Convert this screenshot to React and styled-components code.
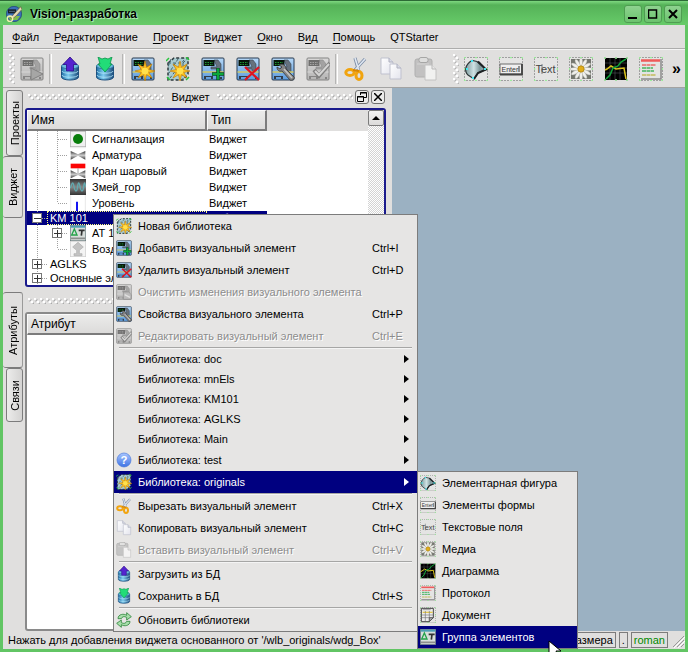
import { Fragment } from "react";
import styled, { createGlobalStyle, css } from "styled-components";

const GlobalStyle = createGlobalStyle`
  :root {
    --face: #e0dfde;
    --menu: #e6e5e4;
    --line: #7c7c7c;
    --select: #000080;
    --green: #62c564;
  }
  * {
    box-sizing: border-box;
  }
  body {
    margin: 0;
    background: var(--face);
    font-family: "Liberation Sans", Arial, sans-serif;
    font-size: 11px;
    line-height: 14px;
    color: #000;
  }
  button {
    font: inherit;
    color: inherit;
    padding: 0;
    border: none;
    background: none;
  }
`

const Window = styled.div`
  position: relative;
  display: flex;
  flex-direction: column;
  min-height: 100vh;
  background: var(--face);
  border: 3px solid var(--green);
  border-top: none;
`

const TitleBar = styled.header`
  display: flex;
  align-items: center;
  gap: 2px;
  height: 25px;
  margin: 0 -3px;
  padding: 2px 6px 0;
  border-top: 1px solid #2c6a35;
  background: linear-gradient(#7ed880 0, #55b258 4px, #67cb69 100%);
`

const Title = styled.h1`
  flex: 1;
  margin: 0 0 0 6px;
  font-size: 12px;
  font-weight: 700;
  text-shadow: 1px 1px 1px #c4f0c4;
`

const WindowButton = styled.button`
  display: flex;
  align-items: center;
  justify-content: center;
  width: 18px;
  height: 18px;
  border: 1px solid #4f9d52;
  border-radius: 3px;
  background: linear-gradient(#8ed28f, #6cc36e);
`

const MenuBar = styled.nav`
  display: flex;
  gap: 1px;
  height: 24px;
  padding: 0 2px;
  border-bottom: 1px solid #adadac;
`

const MenuLink = styled.a`
  padding: 5px 7px;
  color: #000;
  text-decoration: none;
  u {
    text-underline-offset: 2px;
  }
`

const ToolBar = styled.div`
  display: flex;
  align-items: center;
  height: 39px;
  padding-left: 6px;
  border-top: 1px solid #f4f4f4;
  border-bottom: 1px solid #a3a3a2;
`

const ToolButton = styled.button`
  display: flex;
  align-items: center;
  justify-content: center;
  width: 35px;
  height: 34px;
`

const ToolLine = styled.span`
  width: 3px;
  height: 30px;
  border-left: 1px solid #b5b5b4;
  border-right: 1px solid #fff;
`

const BarHandle = styled.span`
  width: 6px;
  height: 30px;
  margin: 0 -1px 0 ${props => props.$spaced ? "10px" : "0"};
  background-image:
    radial-gradient(circle at 1px 1px, #fff 1px, transparent 2px),
    radial-gradient(circle at 4px 4px, #fff 1px, transparent 2px),
    radial-gradient(circle at 2px 2px, #b4b4b4 1px, transparent 2px),
    radial-gradient(circle at 5px 5px, #b4b4b4 1px, transparent 2px);
  background-size: 6px 6px;
`

const More = styled.button`
  flex: 1;
  font-size: 16px;
  font-weight: 700;
`

const Body = styled.main`
  flex: 1;
  display: flex;
`

const Docks = styled.div`
  flex: none;
  display: flex;
  flex-direction: column;
  gap: 5px;
  width: 389px;
`

const DockRow = styled.section`
  display: flex;
  ${props => props.$grow && css`
    flex: 1;
  `}
`

const Tabs = styled.div`
  display: flex;
  flex-direction: column;
  width: 22px;
  padding-top: ${props => props.$flush ? "0" : "2px"};
  border-right: 2px solid var(--face);
`

const Tab = styled.button`
  display: flex;
  align-items: center;
  justify-content: center;
  height: ${props => props.$height}px;
  margin-left: 3px;
  border: 1px solid var(--line);
  border-radius: 3px;
  background: linear-gradient(90deg, #ececeb, #d4d3d2);
  span {
    writing-mode: vertical-rl;
    transform: rotate(180deg);
  }
  ${props => props.$active && css`
    margin-left: 0;
    border-left: none;
    border-right-color: #9a9a99;
    background: var(--face);
  `}
`

const Dock = styled.div`
  flex: 1;
  display: flex;
  flex-direction: column;
  padding-right: 6px;
`

const DockTitle = styled.div`
  display: flex;
  align-items: center;
  gap: 2px;
  height: 20px;
  padding: 0 1px 2px 3px;
`

const DockName = styled.h2`
  margin: 0 5px;
  font-size: 11px;
  font-weight: 400;
`

const Zigzag = styled.span`
  flex: 1;
  height: 6px;
  background-image:
    radial-gradient(circle at 1px 1px, #fff 1px, transparent 2px),
    radial-gradient(circle at 4px 4px, #fff 1px, transparent 2px),
    radial-gradient(circle at 2px 2px, #aaa 1px, transparent 2px),
    radial-gradient(circle at 5px 5px, #aaa 1px, transparent 2px);
  background-size: 6px 6px;
`

const DockButton = styled.button`
  display: flex;
  align-items: center;
  justify-content: center;
  width: 14px;
  height: 14px;
  border: 1px solid #6f6f6f;
  border-radius: 3px;
  background: #ececeb;
`

const Sheet = styled.div`
  flex: 1;
  display: flex;
  align-items: stretch;
  border: 2px solid ${props => props.$focused ? "#1a1a8c" : "#8a8a8a"};
  border-radius: 3px;
  background: #fff;
`

const Table = styled.table`
  flex: 1;
  align-self: flex-start;
  width: 100%;
  table-layout: fixed;
  border-collapse: separate;
  border-spacing: 0;
  td {
    padding: 0;
    white-space: nowrap;
  }
  td + td {
    padding-left: 2px;
  }
`

const HeadCell = styled.th`
  height: 21px;
  padding: 0 3px;
  text-align: left;
  font-size: 12px;
  font-weight: 400;
  background: var(--face);
  ${props => props.$width && css`
    width: ${props.$width}px;
    border: 1px solid #fafafa;
    border-right: 2px solid var(--line);
    border-bottom: 2px solid var(--line);
    background: linear-gradient(#ebebea, #dcdbda);
  `}
`

const Row = styled.tr`
  height: ${props => props.$icon ? "16px" : "14px"};
  line-height: 14px;
  ${props => props.$selected && css`
    color: #fff;
    td:not(:last-child) {
      background: var(--select);
    }
  `}
`

const NameCell = styled.div`
  display: flex;
  align-items: center;
  height: ${props => props.$icon ? "16px" : "14px"};
`

const NodeName = styled.span`
  flex: 1;
  display: flex;
  align-items: center;
  gap: 6px;
  height: 100%;
  padding-left: 3px;
  ${props => props.$selected && css`
    outline: 1px dotted #ffff7f;
    outline-offset: -1px;
  `}
`

const vertical = "repeating-linear-gradient(#a0a0a0 0 1px, transparent 1px 2px)";
const horizontal = "repeating-linear-gradient(90deg, #a0a0a0 0 1px, transparent 1px 2px)";

const Guide = styled.span`
  display: flex;
  align-items: center;
  flex: none;
  width: 20px;
  height: 100%;
  padding-left: 5px;
  background-repeat: no-repeat;
  background-image: ${vertical}, ${horizontal};
  background-position: 10px 0, 11px 50%;
  background-size:
    1px ${props => props.$kind === "end" ? "50%" : "100%"},
    ${props => props.$kind === "line" ? "0" : "9px"} 1px;
`

const Expander = styled.button`
  display: flex;
  width: 10px;
  height: 10px;
  border: 1px solid #777;
  background: #fff;
`

const ScrollBar = styled.div`
  flex: none;
  width: 16px;
  background: repeating-conic-gradient(#d4d4d4 0 25%, #fff 0 50%) 0 0 / 2px 2px;
`

const ScrollButton = styled.button`
  display: flex;
  align-items: center;
  justify-content: center;
  width: 16px;
  height: 16px;
  border: 1px solid var(--line);
  border-radius: 2px;
  background: linear-gradient(#f2f2f2, #dcdbda);
`

const Workspace = styled.div`
  flex: 1;
  background: #9bb1c2;
`

const StatusBar = styled.footer`
  display: flex;
  align-items: center;
  gap: 3px;
  height: 18px;
  padding-left: 5px;
`

const StatusText = styled.span`
  flex: 1;
  white-space: nowrap;
`

const StatusCell = styled.span`
  padding: 0 2px;
  border: 1px solid var(--line);
  color: ${props => props.$user ? "#008a00" : "#000"};
`

const Menu = styled.div`
  position: absolute;
  z-index: 1;
  border: 1px solid var(--line);
  background: var(--menu);
`

const ContextMenu = styled(Menu)`
  left: 110px;
  top: 214px;
  width: 305px;
`

const SubMenu = styled(Menu)`
  left: 100%;
  top: 0;
  width: 161px;
`

const MenuRow = styled.div`
  position: relative;
`

const Item = styled.button`
  display: grid;
  grid-template-columns: 16px 1fr auto;
  column-gap: 6px;
  align-items: center;
  width: 100%;
  height: ${props => props.$low ? "20px" : "22px"};
  padding-left: 2px;
  text-align: left;
  white-space: nowrap;
  &:disabled {
    color: #8c8c8c;
    text-shadow: 1px 1px 0 #fff;
  }
  ${props => props.$selected && css`
    color: #fff;
    background: var(--select);
  `}
`

const Shortcut = styled.span`
  width: 45px;
  padding-left: ${props => props.$arrow ? "32px" : "0"};
`

const Separator = styled.hr`
  height: 2px;
  margin: 0 5px;
  border: none;
  border-top: 1px solid #a6a6a5;
  border-bottom: 1px solid #f4f4f4;
`

const Picture = styled.svg`
  display: block;
  flex: none;
  ${props => props.$gray && css`
    filter: grayscale(1) opacity(0.55);
  `}
`

const Pointer = styled.svg`
  position: absolute;
  left: 130px;
  bottom: -12px;
  z-index: 2;
`

const Frame = () => (
  <>
    <rect x="0.5" y="0.5" width="23" height="23" fill="#e4e4e3" stroke="#5c5c5c" strokeDasharray="1 2" />
    <path d="M0 2V0h2M22 0h2v2M24 22v2h-2M2 24H0v-2M11 .5h2M11 23.5h2M.5 11v2M23.5 11v2" fill="none" stroke="#9bee9b" strokeWidth="1.5" />
  </>
)

const Board = () => (
  <>
    <rect x="1" y="1" width="22" height="22" rx="1" fill="url(#sky)" stroke="#27394e" />
    <path d="M13 3h4l3 4v8h-4v-3h-6v-2h6z" fill="#66727e" stroke="#3b4149" strokeWidth="0.6" />
    <path d="M1.500 15h21" stroke="#d2c964" strokeWidth="1.500" />
    <path d="M3 19v3h2v-2h5v2h2v-3M19 20h2v2h-2z" fill="#333d48" />
    <rect x="2.5" y="3" width="11" height="6" fill="#06150a" />
    <path d="M4 5.500h8M4 7.500h8" stroke="#1d9431" strokeWidth="1" strokeDasharray="1.500 1" />
  </>
)

const Star = () => (
  <g transform="translate(14 14)">
    {[0, 45, 90, 135, 180, 225, 270, 315].map(angle => (
      <path key={angle} d="M-2.500 0L0 -10L2.500 0z" transform={`rotate(${angle})`} fill="#ffc31f" stroke="#c27a00" strokeWidth="0.6" />
    ))}
    <circle r="3.500" fill="#ffe04d" />
  </g>
)

const Drum = () => (
  <>
    <path d="M3.500 9v11c0 4 17 4 17 0V9z" fill="url(#drum)" stroke="#1d4f7d" />
    <path d="M4 14c0 3 16 3 16 0M4 18c0 3 16 3 16 0" fill="none" stroke="#b3e4f7" strokeWidth="0.8" />
    <ellipse cx="12" cy="9" rx="8.500" ry="3" fill="#6fbce0" stroke="#2d719a" strokeWidth="0.8" />
  </>
)

const petals = [0, 30, 60, 90, 120, 150, 180, 210, 240, 270, 300, 330]

const drawings = {
  app: (
    <>
      <circle cx="12" cy="12" r="11.500" fill="#3b6fb8" stroke="#1f3c6b" />
      <path d="M3 5h12v6H3z" fill="#16202c" />
      <path d="M5 8h8" stroke="#93c6ef" strokeDasharray="2 1" />
      <path d="M3 15h18l-4 6H6z" fill="#7ebd4a" />
      <path d="M22 1L11 13l-4 5 3 1 5-4L24 5z" fill="#e3d9b4" stroke="#65583a" />
      <circle cx="6" cy="19" r="4" fill="none" stroke="#f0efae" strokeWidth="2" />
    </>
  ),
  run: <><Board /><path d="M11 11v12l12-6z" fill="#777" stroke="#333" /></>,
  create: <><Board /><Star /></>,
  add: <><Board /><path d="M17 11v12M11 17h12" stroke="#064d22" strokeWidth="3.500" /><path d="M17 11.500v11M11.500 17h11" stroke="#0ba83a" strokeWidth="2" /></>,
  remove: <><Board /><path d="M9 10l14 13M23 10L9 23" stroke="#e01420" strokeWidth="2.200" /></>,
  props: (
    <>
      <Board />
      <path d="M8 8c3-2 7 0 7 4l8 8c1 2-2 4-4 3l-8-9c-3 1-5-1-5-4l3 2 2-2z" fill="#858585" stroke="#3f3f3f" strokeWidth="0.9" />
      <path d="M13 12l8 9" stroke="#c4c4c4" strokeWidth="1.500" />
    </>
  ),
  edit: <><Board /><path d="M8 13l5 6L24 6" fill="none" stroke="#333" strokeWidth="4" /><path d="M9 14l4 4L23 7" fill="none" stroke="#ccc" strokeWidth="2" /></>,
  clear: <><Board /><path d="M11 12h8l4 4v7H11z" fill="#999" stroke="#444" /><path d="M13 16l8 4" stroke="#ddd" strokeWidth="2" /></>,
  library: (
    <>
      <path d="M2 6l6-5h14v16l-5 6H2z" fill="#a9cbd0" stroke="#2c393c" strokeDasharray="3 2" strokeWidth="1.500" />
      <path d="M2 6h15v17M17 6l5-5M5 2l-3 8M12 2l-9 14M18 3L4 21M21 8l-9 12" fill="none" stroke="#456870" strokeDasharray="3 2" />
      <path d="M0 4l3-3M20 0l3 3M1 20l3 3M20 23l3-3" stroke="#29c43e" strokeWidth="1.500" />
      <Star />
    </>
  ),
  load: <><Drum /><path d="M12 0l7 7.500h-3.500V14h-7V7.500H5z" fill="#5524cf" stroke="#2c0e84" strokeWidth="0.8" /></>,
  save: <><Drum /><path d="M5 0l4 2 3-1 3 1 4-2-2 7h2l-7 8-7-8h2z" fill="#22dc78" stroke="#0a9249" strokeWidth="0.8" /></>,
  cut: (
    <>
      <path d="M11 1l4 14M21 2L10 14" stroke="#7c8da6" strokeWidth="3.200" />
      <path d="M11 1l4 13M21 2L11 13" stroke="#dfe7f2" strokeWidth="1.600" />
      <ellipse cx="6" cy="15.500" rx="4.200" ry="3" fill="none" stroke="#f1a40f" strokeWidth="3" />
      <ellipse cx="15" cy="18.500" rx="3" ry="4" fill="none" stroke="#f1a40f" strokeWidth="3" />
      <path d="M9 13l6 1" stroke="#d98600" strokeWidth="2" />
    </>
  ),
  copy: (
    <>
      <path d="M2 1h8l4 4v12H2z" fill="url(#paper)" stroke="#bfc1ce" />
      <path d="M10 1v4h4" fill="#d8dae5" stroke="#aeb0be" />
      <path d="M11 7h7l4 4v11H11z" fill="url(#paper)" stroke="#bfc1ce" />
      <path d="M18 7v4h4" fill="#d8dae5" stroke="#aeb0be" />
    </>
  ),
  paste: (
    <>
      <rect x="1" y="2" width="17" height="18" rx="2" fill="#a9a9a9" stroke="#888" />
      <rect x="5" y="0.500" width="9" height="5" rx="2" fill="#ddd" stroke="#777" />
      <path d="M3 7h12" stroke="#ccc" />
      <path d="M11 8h7l4 4v11H11z" fill="#fff" stroke="#aaa" />
      <path d="M18 8v4h4" fill="#eee" stroke="#999" />
    </>
  ),
  shape: (
    <>
      <Frame />
      <path d="M8 3.500c-7 4-8 11-4 14.500l6 4 4-6 8-3.500-9-8z" fill="url(#steel)" stroke="#2e3638" strokeWidth="1.200" />
      <path d="M10 22l4-6 8-3.500-8-8" fill="none" stroke="#1d2224" strokeWidth="2" />
      <path d="M7 4h2M20 12h2M8 21h2M2 12h2" stroke="#43e8f2" strokeWidth="2" />
    </>
  ),
  form: (
    <>
      <Frame />
      <rect x="1" y="7" width="22" height="10" fill="#efefef" stroke="#6d6d6d" />
      <path d="M1 17.500h22V7" fill="none" stroke="#444" strokeWidth="1.800" />
      <text x="2.500" y="14.500" fontSize="7" fill="#333">Enter</text>
      <path d="M20 9v6" stroke="#333" />
    </>
  ),
  text: (
    <>
      <Frame />
      <text x="1.500" y="16" fontSize="11" fill="#444">Text</text>
      <path d="M8 7v10" stroke="#555" strokeWidth="0.700" />
    </>
  ),
  media: (
    <>
      <Frame />
      <rect x="2" y="2" width="20" height="20" fill="#74766f" />
      <g transform="translate(12 12)">
        {petals.map(angle => (
          <ellipse key={angle} cy="-6.500" rx="1.600" ry="4.500" transform={`rotate(${angle})`} fill="#f0f0ec" stroke="#a5a59e" strokeWidth="0.4" />
        ))}
        <circle r="3.200" fill="#e0ad1d" stroke="#9d7400" strokeWidth="0.600" />
      </g>
    </>
  ),
  chart: (
    <>
      <rect x="1" y="1" width="22" height="22" fill="#000" />
      <path d="M1 6h22M1 11h22M1 16h22M6 1v22M11 1v22M16 1v22" stroke="#5c6268" strokeWidth="0.500" />
      <path d="M1 13l2-1 4-3 5 3 8-1 2 11" fill="none" stroke="#d8c21c" strokeWidth="1.500" />
      <path d="M2 22l4-4 3-7 5-2 3-4 5-3" fill="none" stroke="#11a63b" strokeWidth="1.500" />
      <path d="M0 1h24M0 23h24" stroke="#8fdd8f" strokeDasharray="2 9" strokeWidth="1.500" />
    </>
  ),
  protocol: (
    <>
      <Frame />
      <path d="M2 3.500h19" stroke="#ef5a5a" strokeWidth="2.500" />
      <path d="M3 8h14" stroke="#ea6a6a" strokeWidth="1.500" strokeDasharray="4 0.500" />
      <path d="M3 11h11M3 14h12" stroke="#45b45f" strokeWidth="1.500" strokeDasharray="4 0.500" />
      <path d="M3 18h14" stroke="#c2ba5c" strokeWidth="1.500" strokeDasharray="4 0.500" />
      <path d="M22 2v20H2" fill="none" stroke="#8a8a8a" strokeWidth="1.500" />
    </>
  ),
  document: (
    <>
      <Frame />
      <path d="M2 2h18v14l-6 6H2z" fill="#ededed" stroke="#444" strokeWidth="1.500" />
      <path d="M4 8h15" stroke="#e3c84f" strokeWidth="2" />
      <path d="M3 12h17M3 16h17M8 6v15M14 6v15M4 4h12" stroke="#777" />
      <path d="M20 16h-6v6z" fill="#aaa" stroke="#444" />
    </>
  ),
  group: (
    <>
      <rect x="0.500" y="0.500" width="23" height="23" fill="#d8dedb" stroke="#66777a" />
      <path d="M1 2.500h22" stroke="#4b9eb4" strokeWidth="3" />
      <path d="M6.500 6L2.500 15h8z" fill="none" stroke="#24a34a" strokeWidth="2" />
      <path d="M13 8h9M18 8l-1 8" stroke="#333" strokeWidth="2.500" />
      <path d="M2 20h20" stroke="#666" strokeWidth="2.500" strokeDasharray="2 1" />
    </>
  ),
  help: (
    <>
      <circle cx="12" cy="12" r="10.500" fill="url(#help)" stroke="#4b78d8" />
      <text x="12" y="18" fontSize="17" fontWeight="700" textAnchor="middle" fill="#fff">?</text>
    </>
  ),
  refresh: (
    <>
      <path d="M3 10c0-7 9-8 13-5V1l7 6-7 5V8c-4-2-7-1-8 2z" fill="#a7deaa" stroke="#2b8337" strokeWidth="1.200" />
      <path d="M21 14c0 7-9 8-13 5v4l-7-6 7-5v4c4 2 7 1 8-2z" fill="#a7deaa" stroke="#2b8337" strokeWidth="1.200" />
    </>
  ),
  signal: <><rect x="0.500" y="0.500" width="23" height="23" fill="#f0f0f0" stroke="#aaa" /><circle cx="12" cy="12" r="7.500" fill="#087d0b" /></>,
  valve: <><path d="M0 1h24" stroke="#ddd" /><path d="M1 6l11 5 11-5v13l-11-6-11 6z" fill="url(#metal)" /></>,
  ballValve: (
    <>
      <path d="M1 1h22v7H1z" fill="#fb0505" />
      <path d="M12 8v8" stroke="#777" />
      <path d="M1 11l11 5 11-5v12l-11-5-11 5z" fill="url(#metal)" />
    </>
  ),
  coil: <><rect width="24" height="24" fill="url(#coil)" /><path d="M0 13c2 0 2-7 4-7s2 12 5 12S11 6 13 6s2 12 5 12 2-12 4-12l2 6" fill="none" stroke="#62aab0" strokeWidth="2" /></>,
  level: <><path d="M1 0v24M23 0v24" stroke="#ddd" /><path d="M10.500 10v14" stroke="#1515f2" strokeWidth="3" /></>,
  fan: <><rect x="0.500" y="0.500" width="23" height="23" fill="#f4f4f4" stroke="#ccc" /><path d="M12 2l8 7-6 5v5h4v3H6v-3h4v-5L4 9z" fill="#c3c3c3" stroke="#aaa" /></>,
}

const Icon = ({ name, size = 16, gray }) => (
  <Picture width={size} height={size} viewBox="0 0 24 24" $gray={gray} aria-hidden="true">
    {drawings[name]}
  </Picture>
)

const Gradients = () => (
  <Picture width="0" height="0">
    <linearGradient id="sky" x2="0" y2="1"><stop stopColor="#b6d8f8" /><stop offset="1" stopColor="#5b9bdd" /></linearGradient>
    <linearGradient id="drum"><stop stopColor="#1f6ea6" /><stop offset="0.400" stopColor="#7fcdf0" /><stop offset="1" stopColor="#1c4b7b" /></linearGradient>
    <linearGradient id="paper" x2="1" y2="1"><stop stopColor="#fff" /><stop offset="1" stopColor="#e3e4ed" /></linearGradient>
    <linearGradient id="steel"><stop stopColor="#7f9c9f" /><stop offset="0.400" stopColor="#cfe2e4" /><stop offset="0.700" stopColor="#7d979a" /><stop offset="1" stopColor="#a8bfc2" /></linearGradient>
    <linearGradient id="metal" x2="0" y2="1"><stop stopColor="#333" /><stop offset="0.500" stopColor="#ccc" /><stop offset="1" stopColor="#333" /></linearGradient>
    <linearGradient id="coil" x2="0" y2="1"><stop stopColor="#333" /><stop offset="0.500" stopColor="#888" /><stop offset="1" stopColor="#333" /></linearGradient>
    <linearGradient id="help" x2="0" y2="1"><stop stopColor="#a8c6ff" /><stop offset="1" stopColor="#3d72e4" /></linearGradient>
  </Picture>
)

const menus = [
  ["", "Ф", "айл"],
  ["", "Р", "едактирование"],
  ["", "П", "роект"],
  ["", "В", "иджет"],
  ["", "О", "кно"],
  ["В", "и", "д"],
  ["", "П", "омощь"],
]

const tools = [
  { icon: "run", label: "Запустить", gray: true },
  null,
  { icon: "load", label: "Загрузить из БД" },
  { icon: "save", label: "Сохранить в БД" },
  null,
  { icon: "create", label: "Новый проект" },
  { icon: "library", label: "Новая библиотека" },
  { icon: "add", label: "Добавить визуальный элемент" },
  { icon: "remove", label: "Удалить визуальный элемент" },
  { icon: "props", label: "Свойства визуального элемента" },
  { icon: "edit", label: "Редактировать визуальный элемент", gray: true },
  null,
  { icon: "cut", label: "Вырезать" },
  { icon: "copy", label: "Копировать" },
  { icon: "paste", label: "Вставить", gray: true },
]

const primitives = [
  { icon: "shape", label: "Элементарная фигура" },
  { icon: "form", label: "Элементы формы" },
  { icon: "text", label: "Текстовые поля" },
  { icon: "media", label: "Медиа" },
  { icon: "chart", label: "Диаграмма" },
  { icon: "protocol", label: "Протокол" },
  { icon: "document", label: "Документ" },
  { icon: "group", label: "Группа элементов", selected: true },
]

const actions = [
  [
    { icon: "library", label: "Новая библиотека" },
    { icon: "add", label: "Добавить визуальный элемент", keys: "Ctrl+I" },
    { icon: "remove", label: "Удалить визуальный элемент", keys: "Ctrl+D" },
    { icon: "clear", label: "Очистить изменения визуального элемента", disabled: true },
    { icon: "props", label: "Свойства визуального элемента", keys: "Ctrl+P" },
    { icon: "edit", label: "Редактировать визуальный элемент", keys: "Ctrl+E", disabled: true },
  ],
  [
    { label: "Библиотека: doc", arrow: true },
    { label: "Библиотека: mnEls", arrow: true },
    { label: "Библиотека: KM101", arrow: true },
    { label: "Библиотека: AGLKS", arrow: true },
    { label: "Библиотека: Main", arrow: true },
    { icon: "help", label: "Библиотека: test", arrow: true },
    { icon: "library", label: "Библиотека: originals", arrow: true, selected: true, items: primitives },
  ],
  [
    { icon: "cut", label: "Вырезать визуальный элемент", keys: "Ctrl+X" },
    { icon: "copy", label: "Копировать визуальный элемент", keys: "Ctrl+C" },
    { icon: "paste", label: "Вставить визуальный элемент", keys: "Ctrl+V", disabled: true },
  ],
  [
    { icon: "load", label: "Загрузить из БД" },
    { icon: "save", label: "Сохранить в БД", keys: "Ctrl+S" },
  ],
  [{ icon: "refresh", label: "Обновить библиотеки" }],
]

const nodes = [
  { guides: ["line", "tee"], icon: "signal", name: "Сигнализация", type: "Виджет" },
  { guides: ["line", "tee"], icon: "valve", name: "Арматура", type: "Виджет" },
  { guides: ["line", "tee"], icon: "ballValve", name: "Кран шаровый", type: "Виджет" },
  { guides: ["line", "tee"], icon: "coil", name: "Змей_гор", type: "Виджет" },
  { guides: ["line", "end"], icon: "level", name: "Уровень", type: "Виджет" },
  { guides: ["minus"], name: "KM 101", type: "Библ.", selected: true },
  { guides: ["line", "plus"], icon: "group", name: "АТ 101" },
  { guides: ["line", "end"], icon: "fan", name: "Воздух" },
  { guides: ["plus"], name: "AGLKS" },
  { guides: ["plus"], name: "Основные элементы" },
]

const MenuItem = ({ icon, label, keys, arrow, selected, disabled, items }) => (
  <MenuRow>
    <Item $low={arrow && !icon} $selected={selected} disabled={disabled} role="menuitem">
      {icon ? <Icon name={icon} gray={disabled} /> : <span />}
      <span>{label}</span>
      {keys && <Shortcut>{keys}</Shortcut>}
      {arrow && (
        <Shortcut $arrow>
          <Picture width="5" height="8"><path d="M0 0l5 4-5 4z" fill="currentColor" /></Picture>
        </Shortcut>
      )}
    </Item>
    {items && (
      <SubMenu role="menu">
        {items.map(item => <MenuItem key={item.label} {...item} />)}
        <Pointer width="14" height="20" viewBox="0 0 14 20">
          <path d="M1 1v15l4-4 3 7 3-1-3-7h5z" fill="#fff" stroke="#000" />
        </Pointer>
      </SubMenu>
    )}
  </MenuRow>
)

const DockHeader = ({ name }) => (
  <DockTitle>
    <Zigzag />
    {name && <DockName>{name}</DockName>}
    <Zigzag />
    <DockButton aria-label="Открепить">
      <Picture width="10" height="10"><path d="M3.500 3V.500h6v5H7M3 1h7M.500 4.500h6v5h-6zM0 5h7" fill="none" stroke="#000" /></Picture>
    </DockButton>
    <DockButton aria-label="Закрыть">
      <Picture width="8" height="8"><path d="M0 0l8 8M8 0L0 8" stroke="#000" strokeWidth="1.500" /></Picture>
    </DockButton>
  </DockTitle>
)

const Tree = () => (
  <Table>
    <thead>
      <tr>
        <HeadCell $width={180}>Имя</HeadCell>
        <HeadCell $width={60}>Тип</HeadCell>
        <HeadCell as="td" />
      </tr>
    </thead>
    <tbody>
      {nodes.map(node => (
        <Row key={node.name} $icon={node.icon} $selected={node.selected}>
          <td>
            <NameCell $icon={node.icon}>
              {node.guides.map((kind, i) => (
                <Guide key={i} $kind={kind}>
                  {(kind === "plus" || kind === "minus") && (
                    <Expander aria-label={node.name}>
                      <Picture width="8" height="8">
                        <path d={kind === "plus" ? "M1 4.500h7M4.500 1v7" : "M1 4.500h7"} stroke="#333" />
                      </Picture>
                    </Expander>
                  )}
                </Guide>
              ))}
              <NodeName $selected={node.selected}>
                {node.icon && <Icon name={node.icon} />}
                {node.name}
              </NodeName>
            </NameCell>
          </td>
          <td>{node.type}</td>
          <td />
        </Row>
      ))}
    </tbody>
  </Table>
)

export default function App() {
  return (
    <Window>
      <GlobalStyle />
      <TitleBar>
        <Icon name="app" />
        <Title>Vision-разработка</Title>
        <WindowButton aria-label="Свернуть"><Picture width="10" height="10"><path d="M0 9h9" stroke="#000" strokeWidth="2" /></Picture></WindowButton>
        <WindowButton aria-label="Развернуть"><Picture width="10" height="10"><path d="M.500 1h8v8h-8zM0 1h9" fill="none" stroke="#000" strokeWidth="1.500" /></Picture></WindowButton>
        <WindowButton aria-label="Закрыть"><Picture width="10" height="10"><path d="M1 1l8 8M9 1L1 9" stroke="#000" strokeWidth="2" /></Picture></WindowButton>
      </TitleBar>
      <MenuBar>
        {menus.map(([before, key, after]) => (
          <MenuLink key={key + after} href="#">{before}<u>{key}</u>{after}</MenuLink>
        ))}
        <MenuLink href="#">QTStarter</MenuLink>
      </MenuBar>
      <ToolBar>
        <BarHandle />
        {tools.map((tool, i) => tool ? (
          <ToolButton key={i} aria-label={tool.label}><Icon name={tool.icon} size={24} gray={tool.gray} /></ToolButton>
        ) : <ToolLine key={i} />)}
        <BarHandle $spaced />
        {primitives.slice(0, 6).map(tool => (
          <ToolButton key={tool.icon} aria-label={tool.label}><Icon name={tool.icon} size={24} /></ToolButton>
        ))}
        <More>»</More>
      </ToolBar>
      <Body>
        <Docks>
          <DockRow>
            <Tabs>
              <Tab $height={66}><span>Проекты</span></Tab>
              <Tab $height={62} $active><span>Виджет</span></Tab>
            </Tabs>
            <Dock>
              <DockHeader name="Виджет" />
              <Sheet $focused>
                <Tree />
                <ScrollBar>
                  <ScrollButton aria-label="Вверх"><Picture width="8" height="4"><path d="M0 4l4-4 4 4z" /></Picture></ScrollButton>
                </ScrollBar>
              </Sheet>
            </Dock>
          </DockRow>
          <DockRow $grow>
            <Tabs $flush>
              <Tab $height={76} $active><span>Атрибуты</span></Tab>
              <Tab $height={54}><span>Связи</span></Tab>
            </Tabs>
            <Dock>
              <DockHeader />
              <Sheet>
                <Table>
                  <thead>
                    <tr><HeadCell $width={180}>Атрибут</HeadCell><HeadCell as="td" /></tr>
                  </thead>
                </Table>
              </Sheet>
            </Dock>
          </DockRow>
        </Docks>
        <Workspace />
      </Body>
      <StatusBar>
        <StatusText>Нажать для добавления виджета основанного от '/wlb_originals/wdg_Box'</StatusText>
        <StatusCell>размера</StatusCell>
        <StatusCell>.</StatusCell>
        <StatusCell $user>roman</StatusCell>
        <Picture width="14" height="16"><path d="M2 15L13 4M6 15l7-7M10 15l3-3" stroke="#999" /><path d="M3 16L14 5M7 16l7-7" stroke="#fff" /></Picture>
      </StatusBar>
      <ContextMenu role="menu">
        {actions.map((group, i) => (
          <Fragment key={i}>
            {i > 0 && <Separator />}
            {group.map(item => <MenuItem key={item.label} {...item} />)}
          </Fragment>
        ))}
      </ContextMenu>
      <Gradients />
    </Window>
  );
}
